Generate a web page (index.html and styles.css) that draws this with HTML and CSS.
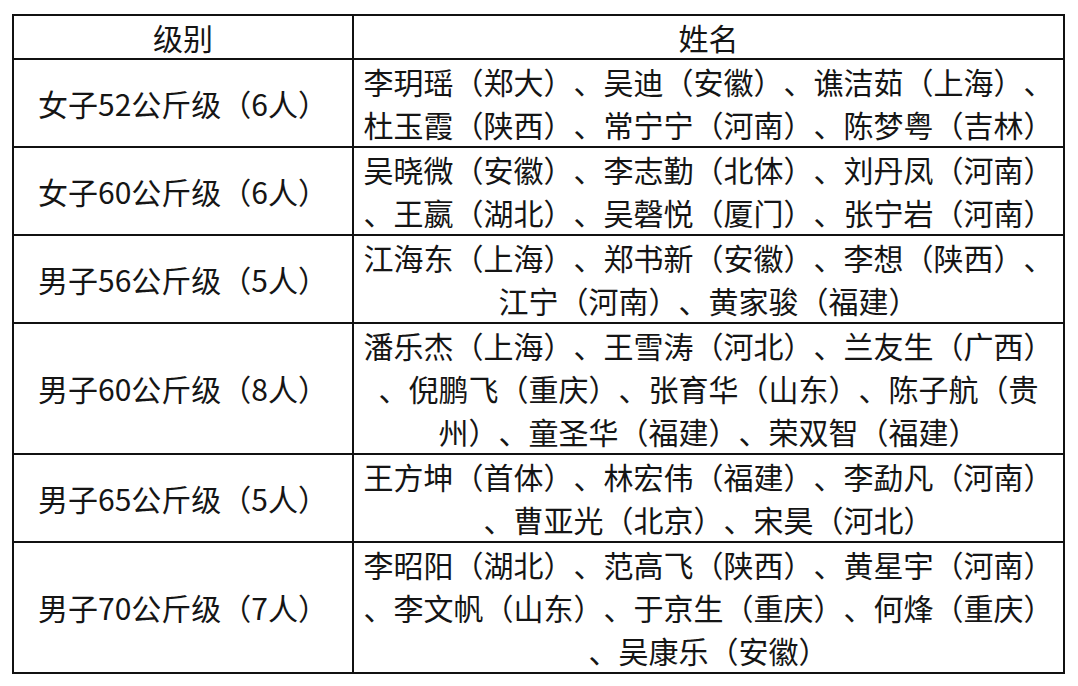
FILE: index.html
```html
<!DOCTYPE html>
<html lang="zh-CN">
<head>
<meta charset="utf-8">
<title>级别 姓名</title>
<link rel="stylesheet" href="styles.css">
</head>
<body>
<div class="page">
<table class="roster">
<colgroup><col class="c1"><col class="c2"></colgroup>
<thead>
<tr><th>级别</th><th>姓名</th></tr>
</thead>
<tbody>
<tr><td class="cat">女子52公斤级（6人）</td><td class="names">李玥瑶（郑大）、吴迪（安徽）、谯洁茹（上海）、<br>杜玉霞（陕西）、常宁宁（河南）、陈梦粤（吉林）</td></tr>
<tr><td class="cat">女子60公斤级（6人）</td><td class="names">吴晓微（安徽）、李志勤（北体）、刘丹凤（河南）<br>、王嬴（湖北）、吴磬悦（厦门）、张宁岩（河南）</td></tr>
<tr><td class="cat">男子56公斤级（5人）</td><td class="names">江海东（上海）、郑书新（安徽）、李想（陕西）、<br>江宁（河南）、黄家骏（福建）</td></tr>
<tr><td class="cat">男子60公斤级（8人）</td><td class="names">潘乐杰（上海）、王雪涛（河北）、兰友生（广西）<br>、倪鹏飞（重庆）、张育华（山东）、陈子航（贵<br>州）、童圣华（福建）、荣双智（福建）</td></tr>
<tr><td class="cat">男子65公斤级（5人）</td><td class="names">王方坤（首体）、林宏伟（福建）、李勐凡（河南）<br>、曹亚光（北京）、宋昊（河北）</td></tr>
<tr><td class="cat">男子70公斤级（7人）</td><td class="names">李昭阳（湖北）、范高飞（陕西）、黄星宇（河南）<br>、李文帆（山东）、于京生（重庆）、何烽（重庆）<br>、吴康乐（安徽）</td></tr>
</tbody>
</table>
</div>
</body>
</html>
```
FILE: styles.css
```css
html, body {
  margin: 0;
  padding: 0;
  background: #ffffff;
}
.page {
  padding: 14px 0 0 12px;
}
.roster {
  border-collapse: collapse;
  table-layout: fixed;
  width: 1051px;
  font-family: "Noto Sans CJK SC", "Noto Sans", sans-serif;
  font-size: 30px;
  color: #151515;
  text-spacing-trim: space-all;
  font-feature-settings: "halt" 0, "chws" 0, "palt" 0;
}
.c1 { width: 340px; }
.c2 { width: 711px; }
.roster th,
.roster td {
  border: 2px solid #111111;
  padding: 0;
  text-align: center;
  vertical-align: middle;
  white-space: nowrap;
}
.roster th {
  font-weight: 400;
  line-height: 42px;
}
.roster td {
  line-height: 43px;
}
.roster td.names {
  padding: 0 4px;
}
```
